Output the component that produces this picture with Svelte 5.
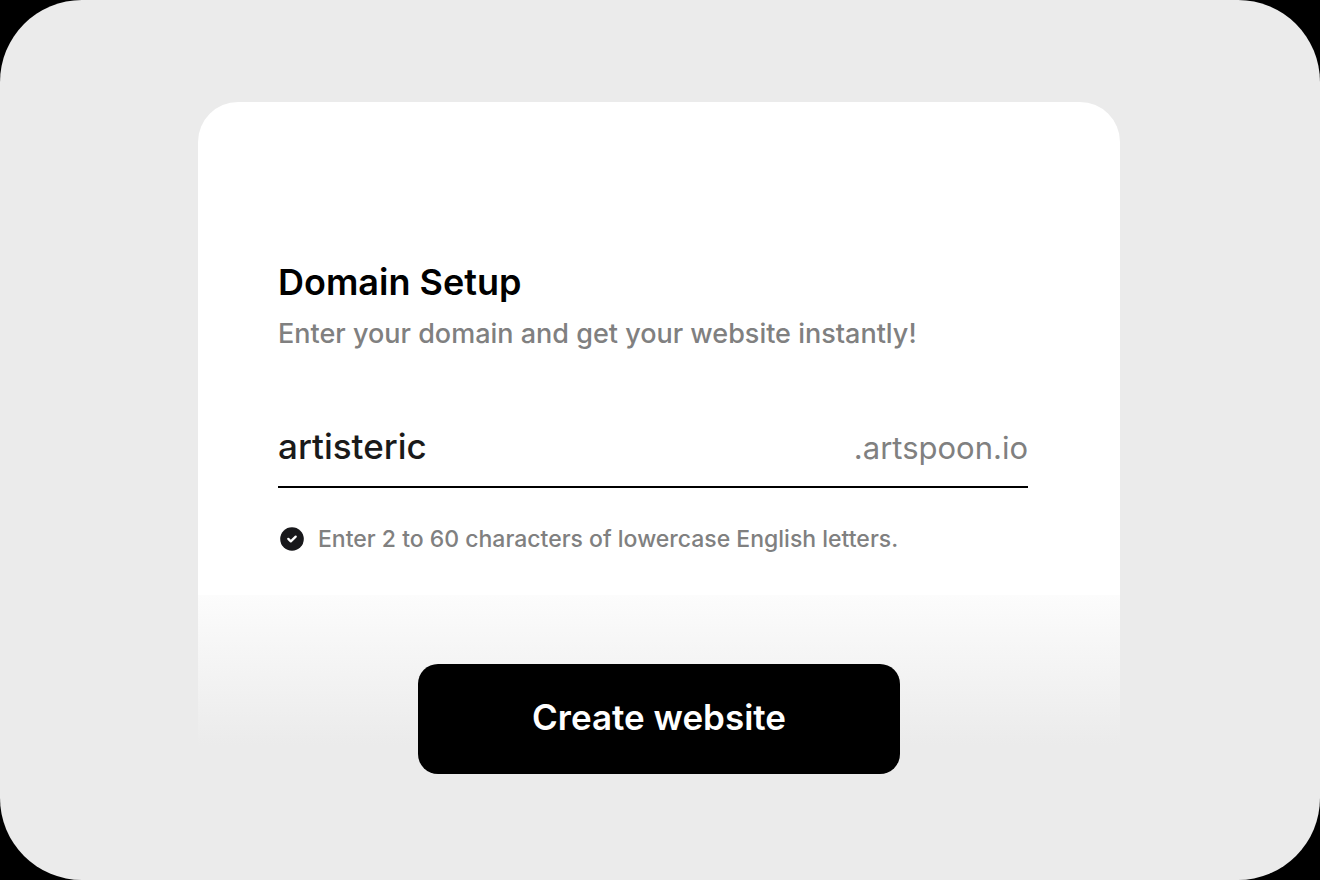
<script lang="ts">
    let domain = $state('artisteric');
    let valid = $derived(/^[a-z]{2,60}$/.test(domain));

    function createWebsite(event: SubmitEvent) {
        event.preventDefault();
    }
</script>

<div class="page">
    <main class="stage">
        <form class="card" onsubmit={createWebsite}>
            <section class="setup">
                <h1>Domain Setup</h1>
                <p class="subtitle">Enter your domain and get your website instantly!</p>

                <div class="field">
                    <input
                        type="text"
                        aria-label="Domain"
                        aria-describedby="domain-hint"
                        spellcheck="false"
                        autocomplete="off"
                        bind:value={domain}
                    />
                    <span class="suffix">.artspoon.io</span>
                </div>

                <p class="hint" id="domain-hint">
                    <svg class:invalid={!valid} viewBox="0 0 24 24" aria-hidden="true">
                        <circle cx="12" cy="12" r="11.8" />
                        <path d="M8.3 11.9l2.5 2.4 4.9-4.7" />
                    </svg>
                    Enter 2 to 60 characters of lowercase English letters.
                </p>
            </section>

            <footer>
                <button type="submit">Create website</button>
            </footer>
        </form>
    </main>
</div>

<style>
    :global(body) {
        margin: 0;
        background: #000;
    }

    .page {
        min-height: 100vh;
        display: flex;
        background: #000;
        font-family: Inter, 'Liberation Sans', sans-serif;
    }

    .stage {
        flex: 1;
        display: flex;
        justify-content: center;
        align-items: flex-start;
        box-sizing: border-box;
        padding: 102px 200px 104px 198px;
        border-radius: 82px;
        background: #ebebeb;
    }

    .card {
        flex: 1;
        max-width: 922px;
    }

    .setup {
        padding: 156px 92px 40px 80px;
        border-radius: 40px 40px 0 0;
        background: #fff;
    }

    h1 {
        margin: 0;
        font-size: 36px;
        line-height: 48px;
        font-weight: 600;
        color: #000;
    }

    .subtitle {
        margin: 8px 0 0;
        font-size: 27px;
        line-height: 40px;
        font-weight: 500;
        color: #808080;
    }

    .field {
        display: flex;
        align-items: baseline;
        gap: 16px;
        margin-top: 66px;
        padding-bottom: 14px;
        border-bottom: 2px solid #000;
    }

    input {
        flex: 1;
        min-width: 0;
        height: 52px;
        padding: 0;
        border: 0;
        outline: 0;
        background: none;
        font-family: inherit;
        font-size: 35px;
        font-weight: 500;
        color: #1a1a1a;
    }

    .suffix {
        font-size: 31px;
        line-height: 40px;
        color: #808080;
    }

    .hint {
        display: flex;
        align-items: center;
        gap: 14px;
        margin: 35px 0 0;
        padding-left: 2px;
        font-size: 23px;
        line-height: 32px;
        font-weight: 500;
        color: #808080;
    }

    .hint svg {
        flex: none;
        width: 24px;
        height: 24px;
        fill: #18181b;
    }

    .hint svg.invalid {
        fill: #b4b4b4;
    }

    .hint path {
        fill: none;
        stroke: #fff;
        stroke-width: 2.3;
        stroke-linecap: round;
        stroke-linejoin: round;
    }

    footer {
        display: flex;
        justify-content: center;
        padding-top: 69px;
        background: linear-gradient(#fcfcfc, #ebebeb 150px);
    }

    button {
        width: 482px;
        height: 110px;
        padding: 0 0 4px;
        border: 0;
        border-radius: 20px;
        background: #000;
        font-family: inherit;
        font-size: 35px;
        font-weight: 600;
        color: #fff;
        cursor: pointer;
    }
</style>
